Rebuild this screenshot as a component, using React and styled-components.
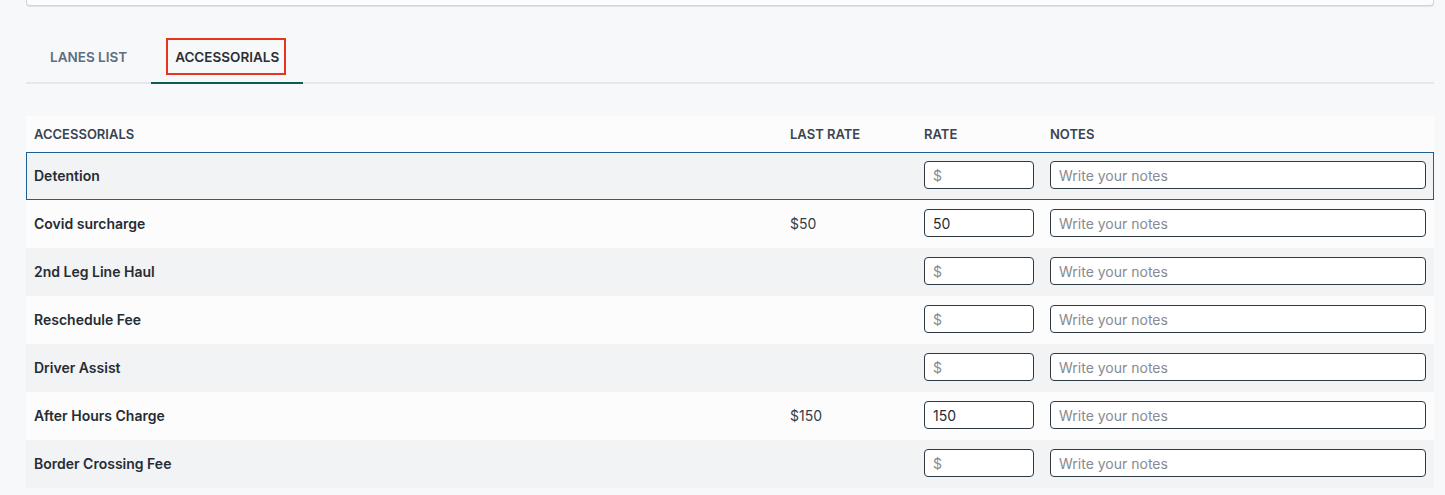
import React from 'react';
import styled, {createGlobalStyle} from 'styled-components';

const GlobalStyle = createGlobalStyle`
    body{
        margin:0;
        background:#f7f8fa;
        font-family: Inter, "Noto Sans", sans-serif;
        color:#262c33;
    }
`;

const rows = [
    {name: 'Detention', last: '', rate: '', selected: true},
    {name: 'Covid surcharge', last: '$50', rate: '50'},
    {name: '2nd Leg Line Haul', last: '', rate: ''},
    {name: 'Reschedule Fee', last: '', rate: ''},
    {name: 'Driver Assist', last: '', rate: ''},
    {name: 'After Hours Charge', last: '$150', rate: '150'},
    {name: 'Border Crossing Fee', last: '', rate: ''},
];

const App = () =>{
    return(
        <SPage>
            <GlobalStyle/>
            <TopCard/>
            <Tabs>
                <Tab>
                    <TabLabel>LANES LIST</TabLabel>
                </Tab>
                <Tab active>
                    <TabLabel marked>ACCESSORIALS</TabLabel>
                </Tab>
            </Tabs>
            <Table>
                <HeadRow>
                    <Cell>ACCESSORIALS</Cell>
                    <Cell>LAST RATE</Cell>
                    <Cell>RATE</Cell>
                    <Cell>NOTES</Cell>
                </HeadRow>
                {rows.map((r, i) => (
                    <Row key={r.name} striped={i % 2 === 0} selected={r.selected}>
                        <NameCell>{r.name}</NameCell>
                        <Cell>{r.last}</Cell>
                        <Cell><RateInput defaultValue={r.rate} placeholder="$"/></Cell>
                        <Cell><NotesInput placeholder="Write your notes"/></Cell>
                    </Row>
                ))}
            </Table>
        </SPage>
    );
};

const SPage = styled.div`
    padding:0 11px 0 26px;
    width:1408px;
`;

const TopCard = styled.div`
    height:5px;
    background:#fcfcfd;
    border:1px solid #cfd6de;
    border-top:none;
    border-radius:0 0 4px 4px;
    box-shadow:0 1px 0 #dfe4ea;
`;

const Tabs = styled.div`
    display:flex;
    margin-top:32px;
    border-bottom:2px solid #e3e8ee;
    height:44px;
`;

const Tab = styled.div`
    display:flex;
    align-items:flex-start;
    padding:2px ${p => p.active ? '19px' : '24px'} 0 ${p => p.active ? '17px' : '24px'};
    margin-bottom:-2px;
    font-size:13.5px;
    font-weight:600;
    color:${p => p.active ? '#2a2f36' : '#5e6e80'};
    border-bottom:2px solid ${p => p.active ? '#0f5a55' : 'transparent'};
`;

const TabLabel = styled.span`
    display:flex;
    align-items:center;
    height:33px;
    padding:${p => p.marked ? '0 5px 0 7px' : '0'};
    outline:${p => p.marked ? '2px solid #e8341f' : 'none'};
`;

const Table = styled.div`
    margin-top:32px;
    display:flex;
    flex-direction:column;
`;

const grid = `
    display:grid;
    grid-template-columns:756px 134px 126px 1fr;
    align-items:center;
    padding:0 8px;
`;

const HeadRow = styled.div`
    ${grid}
    height:36px;
    background:#fcfcfd;
    font-size:13px;
    font-weight:600;
    color:#3a4350;
`;

const Row = styled.div`
    ${grid}
    height:48px;
    box-sizing:border-box;
    padding-bottom:2px;
    background:${p => p.striped ? '#f2f3f5' : '#fcfcfd'};
    font-size:14px;
    color:#353c44;
    ${p => p.selected && `
        border:1px solid #1d5f8e;
        padding:0 7px 2px 7px;
    `}
`;

const Cell = styled.div`
    display:flex;
    align-items:center;
`;

const NameCell = styled(Cell)`
    font-weight:600;
    color:#262c33;
`;

const inputBase = `
    height:28px;
    box-sizing:border-box;
    border:1px solid #2f3944;
    border-radius:4px;
    background:#ffffff;
    padding:0 8px;
    font-family:Inter, "Noto Sans", sans-serif;
    font-size:14px;
    color:#262c33;
    outline:none;
    &::placeholder{
        color:#858b93;
    }
`;

const RateInput = styled.input`
    ${inputBase}
    width:110px;
`;

const NotesInput = styled.input`
    ${inputBase}
    width:376px;
`;

export default App;
